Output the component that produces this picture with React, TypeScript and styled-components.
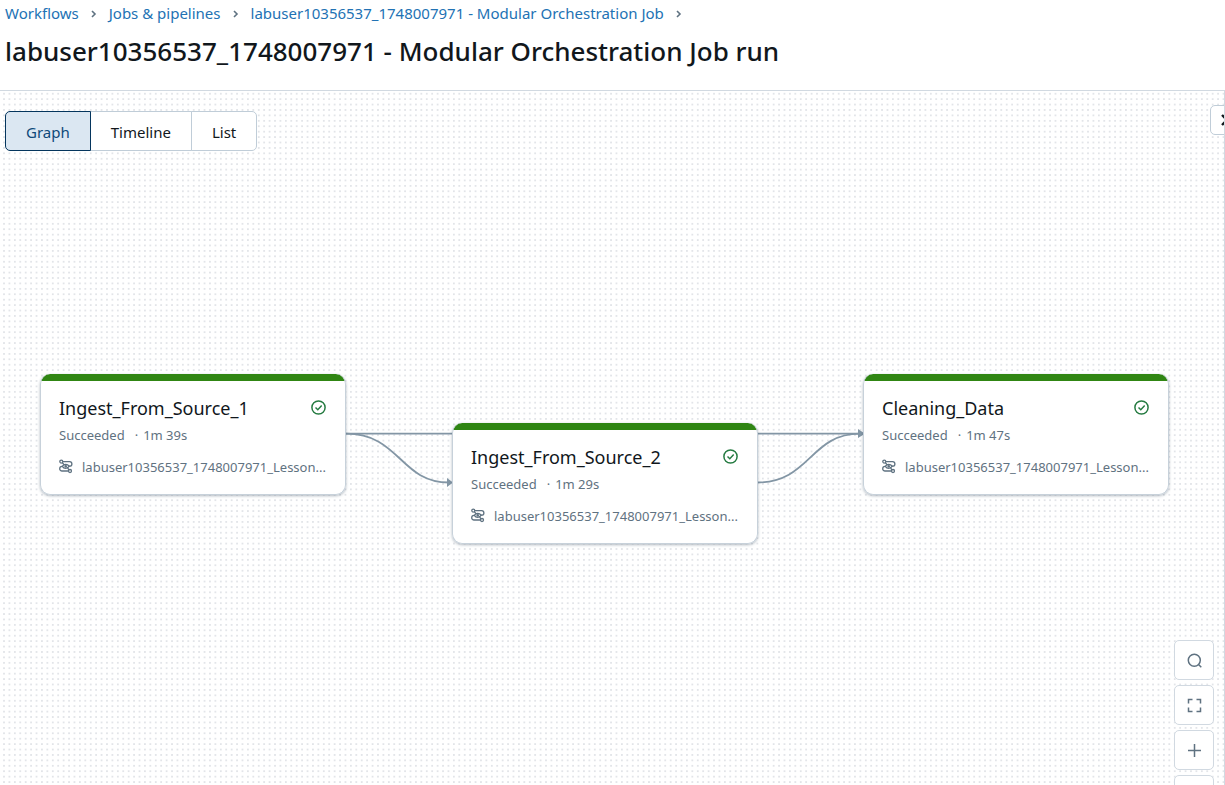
import React from "react";
import styled, { createGlobalStyle } from "styled-components";

const Global = createGlobalStyle`
  * { box-sizing: border-box; }
  html, body, #root { height: 100%; }
  body { margin: 0; background: #fff; color: #11171c; font-family: "Noto Sans", "Segoe UI", sans-serif; overflow: hidden; }
  button { font: inherit; }
`;

const Page = styled.div`
  display: flex;
  flex-direction: column;
  height: 100vh;
`;

const Header = styled.header`
  display: flex;
  flex-direction: column;
  height: 90px;
  padding: 1px 5px 0;
`;

const Breadcrumb = styled.nav`
  display: flex;
  align-items: center;
  gap: 10px;
  font-size: 15px;
  line-height: 24px;
  white-space: nowrap;
`;

const Crumb = styled.a`
  color: #2272b4;
  text-decoration: none;
`;

const Title = styled.h1`
  margin: 8px 0 0;
  font-size: 26px;
  line-height: 36px;
  font-weight: 500;
  white-space: nowrap;
`;

const Canvas = styled.main`
  position: relative;
  flex: 1;
  min-height: 0;
  overflow: hidden;
  border-top: 1px solid #d1d9e1;
  border-right: 1px solid #d1d9e1;
`;

const DotGrid = styled.svg`
  position: absolute;
  inset: 0;
`;

const ViewSwitch = styled.div`
  position: absolute;
  top: 20px;
  left: 5px;
  display: flex;
`;

const ViewButton = styled.button<{ $active?: boolean }>`
  height: 40px;
  padding: 2px 20px 0;
  margin-left: -1px;
  border: 1px solid ${(p) => (p.$active ? "#04355d" : "#c0cdd8")};
  background: ${(p) => (p.$active ? "#dbe7f2" : "#fff")};
  color: ${(p) => (p.$active ? "#0e4a7a" : "#11171c")};
  font-size: 15px;
  line-height: 20px;
  z-index: ${(p) => (p.$active ? 1 : 0)};
  &:first-child { margin-left: 0; border-radius: 5px 0 0 5px; }
  &:last-child { border-radius: 0 5px 5px 0; }
`;

const Edges = styled.svg`
  position: absolute;
  top: 0;
  left: 0;
  overflow: visible;
`;

const Node = styled.article<{ $x: number; $y: number }>`
  position: absolute;
  left: ${(p) => p.$x}px;
  top: ${(p) => p.$y}px;
  width: 306px;
  height: 121px;
  padding: 22px 18px 0;
  overflow: hidden;
  border: 1px solid #c7d1da;
  border-top: 0;
  border-radius: 10px;
  background: linear-gradient(#308613 7px, #fff 7px);
  box-shadow: 0 1px 3px rgba(60, 80, 100, 0.4);
`;

const NodeHead = styled.div`
  display: flex;
  justify-content: space-between;
  align-items: center;
`;

const NodeTitle = styled.h2`
  margin: 0;
  font-size: 18px;
  line-height: 24px;
  font-weight: 400;
`;

const Status = styled.p`
  display: flex;
  gap: 10px;
  margin: 5px 0 0;
  color: #5f7281;
  font-size: 13px;
  line-height: 20px;
`;

const Duration = styled.span`
  display: flex;
  gap: 5px;
`;

const Source = styled.p`
  display: flex;
  align-items: center;
  gap: 9px;
  margin: 12px 0 0;
  color: #5f7281;
  font-size: 13px;
  line-height: 20px;
  white-space: nowrap;
`;

const PanelToggle = styled.button`
  position: absolute;
  top: 14px;
  right: -18px;
  display: flex;
  align-items: center;
  justify-content: center;
  width: 32px;
  height: 30px;
  padding: 0;
  border: 1px solid #c0cdd8;
  border-radius: 5px;
  background: #fff;
  color: #11171c;
`;

const Controls = styled.div`
  position: absolute;
  top: 549px;
  right: 10px;
  display: flex;
  flex-direction: column;
  gap: 5px;
`;

const ControlButton = styled.button`
  display: flex;
  align-items: center;
  justify-content: center;
  width: 40px;
  height: 40px;
  padding: 0;
  border: 1px solid #d1d9e1;
  border-radius: 5px;
  background: #fff;
  color: #5f7281;
`;

const Chevron = () => (
  <svg width="10" height="12" viewBox="0 0 10 12" fill="none" stroke="#5f7281" strokeWidth="1.6" aria-hidden>
    <path d="M3 4 L6 7 L3 10" />
  </svg>
);

const CheckIcon = () => (
  <svg width="16" height="16" viewBox="0 0 16 16" fill="none" stroke="#277c43" strokeWidth="1.5" aria-label="Succeeded">
    <circle cx="7.5" cy="7.5" r="6.6" />
    <path d="M4.500 7.500 L6.800 9.700 L10.700 5.600" />
  </svg>
);

const PipelineIcon = () => (
  <svg width="14" height="16" viewBox="0 0 14 16" fill="none" stroke="currentColor" strokeWidth="1.3" aria-hidden>
    <circle cx="2.300" cy="2.600" r="1.500" />
    <circle cx="11" cy="12" r="1.500" />
    <path d="M3.800 2.600 H10.600 A2.300 2.300 0 0 1 10.600 7.200 H10" />
    <path d="M9.500 12 H3 A2.300 2.300 0 0 1 3 7.400 H3.600" />
    <path d="M3.300 7.400 C5 4.700 8.300 4.700 10.200 7.200 C8.500 10 5 10 3.300 7.400 Z" />
    <circle cx="6.700" cy="7.300" r="0.700" />
    <path d="M3.400 3.800 L5 5.600 M8.600 9 L10 10.800" />
  </svg>
);

type Task = { name: string; duration: string; x: number; y: number };

const tasks: Task[] = [
  { name: "Ingest_From_Source_1", duration: "1m 39s", x: 40, y: 283 },
  { name: "Ingest_From_Source_2", duration: "1m 29s", x: 452, y: 332 },
  { name: "Cleaning_Data", duration: "1m 47s", x: 863, y: 283 },
];

const TaskNode = ({ task }: { task: Task }) => (
  <Node $x={task.x} $y={task.y}>
    <NodeHead>
      <NodeTitle>{task.name}</NodeTitle>
      <CheckIcon />
    </NodeHead>
    <Status>
      <span>Succeeded</span>
      <Duration>
        <span>·</span>
        <span>{task.duration}</span>
      </Duration>
    </Status>
    <Source>
      <PipelineIcon />
      <span>labuser10356537_1748007971_Lesson...</span>
    </Source>
  </Node>
);

export default function App() {
  return (
    <Page>
      <Global />
      <Header>
        <Breadcrumb aria-label="Breadcrumb">
          <Crumb href="#workflows">Workflows</Crumb>
          <Chevron />
          <Crumb href="#jobs">Jobs &amp; pipelines</Crumb>
          <Chevron />
          <Crumb href="#job">labuser10356537_1748007971 - Modular Orchestration Job</Crumb>
          <Chevron />
        </Breadcrumb>
        <Title>labuser10356537_1748007971 - Modular Orchestration Job run</Title>
      </Header>
      <Canvas>
        <DotGrid width="100%" height="100%" aria-hidden>
          <defs>
            <pattern id="dots" x="1.300" y="0" width="5.420" height="5.420" patternUnits="userSpaceOnUse">
              <circle cx="2.700" cy="2.700" r="1" fill="#dcdfe4" />
            </pattern>
          </defs>
          <rect width="100%" height="100%" fill="url(#dots)" />
        </DotGrid>
        <Edges width="1" height="1" fill="none" stroke="#8396a5" strokeWidth="1.8" aria-hidden>
          <path d="M346 342.700 H859" />
          <path d="M346 342.700 C400 342.700 400 391.500 449 391.500" />
          <path d="M757 391.500 C810 391.500 810 342.700 860 342.700" />
          <path d="M447 387 L453 391.500 L447 396 Z M858 338 L865 342.700 L858 347 Z" fill="#8396a5" stroke="none" />
        </Edges>
        {tasks.map((t) => (
          <TaskNode key={t.name} task={t} />
        ))}
        <ViewSwitch>
          <ViewButton $active>Graph</ViewButton>
          <ViewButton>Timeline</ViewButton>
          <ViewButton>List</ViewButton>
        </ViewSwitch>
        <PanelToggle aria-label="Expand panel">
          <svg width="16" height="16" viewBox="0 0 16 16" fill="none" stroke="currentColor" strokeWidth="2.4">
            <path d="M4 3 L9 8 L4 13" />
          </svg>
        </PanelToggle>
        <Controls>
          <ControlButton aria-label="Search">
            <svg width="16" height="16" viewBox="0 0 16 16" fill="none" stroke="currentColor" strokeWidth="1.5">
              <circle cx="8.300" cy="8.300" r="6" />
              <path d="M12.500 12.500 L15.300 15.300" />
            </svg>
          </ControlButton>
          <ControlButton aria-label="Fit to screen">
            <svg width="16" height="16" viewBox="0 0 16 16" fill="none" stroke="currentColor" strokeWidth="1.5">
              <path d="M2.500 6.500 V2.500 H6.500 M10.500 2.500 H14.500 V6.500 M14.500 10.500 V14.500 H10.500 M6.500 14.500 H2.500 V10.500" />
            </svg>
          </ControlButton>
          <ControlButton aria-label="Zoom in">
            <svg width="16" height="16" viewBox="0 0 16 16" fill="none" stroke="currentColor" strokeWidth="1.5">
              <path d="M8.500 2 V15 M2 8.500 H15" />
            </svg>
          </ControlButton>
          <ControlButton aria-label="Zoom out">
            <svg width="16" height="16" viewBox="0 0 16 16" fill="none" stroke="currentColor" strokeWidth="1.5">
              <path d="M2 8.500 H15" />
            </svg>
          </ControlButton>
        </Controls>
      </Canvas>
    </Page>
  );
}
